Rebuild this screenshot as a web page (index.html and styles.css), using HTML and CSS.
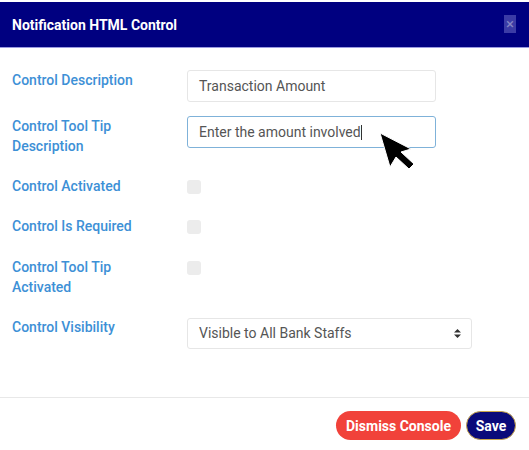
FILE: index.html
```html
<!DOCTYPE html>
<html>
<head>
<meta charset="utf-8">
<link rel="stylesheet" href="styles.css">
</head>
<body>
<div class="modal">
  <div class="modal-header">
    <span class="title">Notification HTML Control</span>
    <span class="close">×</span>
  </div>
  <div class="modal-body">
    <div class="row r1">
      <div class="label">Control Description</div>
      <div class="field"><div class="input">Transaction Amount</div></div>
    </div>
    <div class="row r2">
      <div class="label">Control Tool Tip<br>Description</div>
      <div class="field"><div class="input focused">Enter the amount involved<span class="caret"></span></div></div>
    </div>
    <div class="row r3">
      <div class="label">Control Activated</div>
      <div class="field"><span class="checkbox"></span></div>
    </div>
    <div class="row r4">
      <div class="label">Control Is Required</div>
      <div class="field"><span class="checkbox"></span></div>
    </div>
    <div class="row r5">
      <div class="label">Control Tool Tip<br>Activated</div>
      <div class="field"><span class="checkbox"></span></div>
    </div>
    <div class="row r6">
      <div class="label">Control Visibility</div>
      <div class="field"><div class="select">Visible to All Bank Staffs<span class="arrows"><svg width="7" height="9" viewBox="0 0 7 9"><path d="M3.5 0 L7 3.5 H0 Z M0 5.5 H7 L3.5 9 Z" fill="#333"/></svg></span></div></div>
    </div>
  </div>
  <div class="modal-footer">
    <button class="btn btn-dismiss">Dismiss Console</button>
    <button class="btn btn-save">Save</button>
  </div>
  <svg class="pointer" width="38" height="40" viewBox="0 0 38 40">
    <path d="M1 1 L32 17 L22 20 L35 32 L30 37 L17 25 L11 35 Z" fill="#000" stroke="#fff" stroke-width="1"/>
  </svg>
</div>
</body>
</html>
```
FILE: styles.css
```css
* { box-sizing: border-box; }
html, body { margin: 0; padding: 0; background: #fff; }
body { font-family: Roboto, "Liberation Sans", sans-serif; width: 529px; height: 450px; overflow: hidden; }
.modal { position: relative; width: 529px; height: 450px; background: #fff; }
.modal-header {
  margin-top: 2px;
  height: 46px;
  background: #000080;
  border-bottom: 1px solid #9a9ae0;
  display: flex;
  align-items: center;
  justify-content: space-between;
  padding: 0 13px 0 12px;
}
.title { color: #fff; font-weight: 700; font-size: 14px; }
.close {
  width: 12px; height: 18px;
  background: #3b3ba6;
  color: #8585c4;
  font-size: 15px; line-height: 18px; text-align: center;
  margin-top: -2px;
}
.modal-body { padding: 22px 0 0 12px; height: 349px; }
.row { display: flex; align-items: flex-start; }
.r1 { margin-bottom: 14px; }
.r2 { margin-bottom: 20px; }
.r3 { margin-bottom: 20px; }
.r4 { margin-bottom: 21px; }
.r5 { margin-bottom: 20px; }
.label {
  width: 175px;
  color: #3d90d6;
  font-size: 14px;
  font-weight: 500;
  line-height: 20px;
}
.field { flex: 0 0 auto; }
.input {
  width: 249px; height: 32px;
  border: 1px solid #e6e6e6;
  border-radius: 3px;
  padding: 0 11px;
  font-size: 14px;
  color: #555;
  line-height: 30px;
}
.input.focused { border-color: #7fb2d9; }
.caret { display: inline-block; width: 1px; height: 15px; background: #333; vertical-align: -3px; }
.checkbox {
  display: block;
  width: 14px; height: 14px;
  background: #ececec;
  border-radius: 3px;
  margin-top: 4px;
}
.select {
  width: 285px; height: 31px;
  border: 1px solid #e6e6e6;
  border-radius: 3px;
  padding: 0 11px;
  font-size: 14px;
  color: #555;
  line-height: 29px;
  display: flex; justify-content: space-between; align-items: center;
  margin-top: 1px;
}
.arrows { display: flex; align-items: center; margin-right: -1px; }
.modal-footer {
  border-top: 1px solid #e8e8e8;
  display: flex; justify-content: flex-end; gap: 5px;
  padding: 13px 13px 0 0;
}
.btn {
  font-family: Roboto, "Liberation Sans", sans-serif;
  font-weight: 700;
  font-size: 14px;
  color: #fff;
  height: 29px;
  border-radius: 15px;
  border: none;
  padding: 0 9px;
}
.btn-dismiss { background: #f1423a; width: 125px; }
.btn-save { background: #0a0a7a; border: 1.5px solid #c9a64a; width: 50px; padding: 0; }
.pointer { position: absolute; left: 379px; top: 130px; }
```
